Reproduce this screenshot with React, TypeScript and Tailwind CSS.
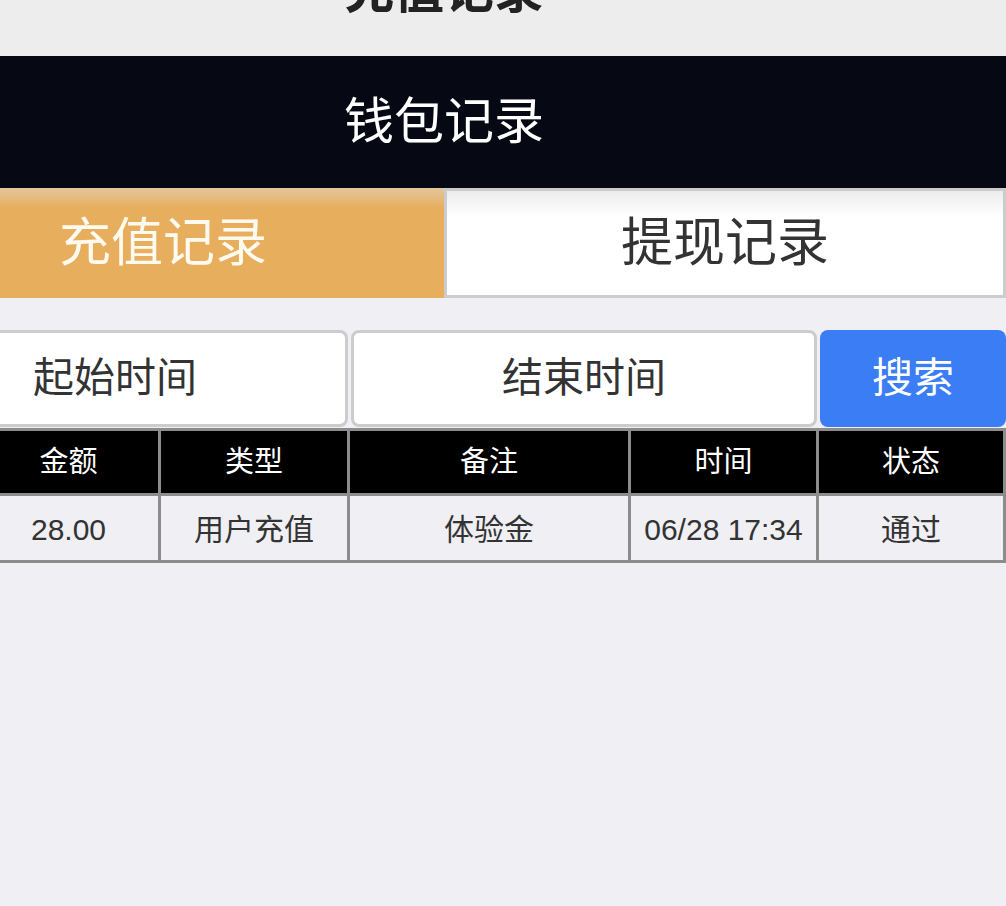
const rows = [
  { amount: "28.00", type: "用户充值", note: "体验金", time: "06/28 17:34", status: "通过" },
];

const headers = ["金额", "类型", "备注", "时间", "状态"];

export default function App() {
  return (
    <div
      className="min-h-[906px] w-[1006px] overflow-hidden bg-[#efeff4]"
      style={{ fontFamily: '"Liberation Sans", "Noto Sans CJK SC", sans-serif' }}
    >
      <div className="ml-[-118px] w-[1124px]">
        <header className="h-[56px] overflow-hidden bg-[#ededed]">
          <div className="mt-[-34px] text-center text-[50px] font-bold leading-none text-[#222]">充值记录</div>
        </header>

        <div className="flex h-[132px] items-center justify-center bg-[#060814] text-[50px] text-white">钱包记录</div>

        <div className="flex h-[110px]">
          <button className="flex w-[562px] items-center justify-center bg-gradient-to-b from-[#e2c79c] via-[#e7ae5d] via-[18%] to-[#e7ae5d] text-[52px] text-[#fffaf0]">
            充值记录
          </button>
          <button className="flex w-[562px] items-center justify-center border-[3px] border-[#cccccc] bg-gradient-to-b from-[#ececec] via-white via-[25%] to-white text-[52px] text-[#333]">
            提现记录
          </button>
        </div>

        <div className="mt-[32px] flex h-[97px] gap-[3px]">
          <div className="flex w-[466px] items-center justify-center rounded-[8px] border-[3px] border-[#cccccc] bg-white text-[41px] text-[#333]">
            起始时间
          </div>
          <div className="flex w-[466px] items-center justify-center rounded-[8px] border-[3px] border-[#cccccc] bg-white text-[41px] text-[#333]">
            结束时间
          </div>
          <button className="flex flex-1 items-center justify-center rounded-[8px] bg-[#3a7df4] text-[41px] text-white">
            搜索
          </button>
        </div>

        <div className="ml-[94px] mt-[1px] grid grid-cols-[179px_186px_278px_185px_1fr] gap-[3px] border-[3px] border-[#8c8c8c] bg-[#8c8c8c]">
          {headers.map((h) => (
            <div key={h} className="flex h-[62px] items-center justify-center bg-black pt-[2px] text-[29px] text-white">
              {h}
            </div>
          ))}
          {rows.map((r) => (
            <>
              <div className="flex h-[64px] items-center justify-center bg-[#efeff4] pt-[2px] text-[30px] text-[#333]">{r.amount}</div>
              <div className="flex h-[64px] items-center justify-center bg-[#efeff4] pt-[2px] text-[30px] text-[#333]">{r.type}</div>
              <div className="flex h-[64px] items-center justify-center bg-[#efeff4] pt-[2px] text-[30px] text-[#333]">{r.note}</div>
              <div className="flex h-[64px] items-center justify-center bg-[#efeff4] pt-[2px] text-[30px] text-[#333]">{r.time}</div>
              <div className="flex h-[64px] items-center justify-center bg-[#efeff4] pt-[2px] text-[30px] text-[#333]">{r.status}</div>
            </>
          ))}
        </div>
      </div>
    </div>
  );
}
